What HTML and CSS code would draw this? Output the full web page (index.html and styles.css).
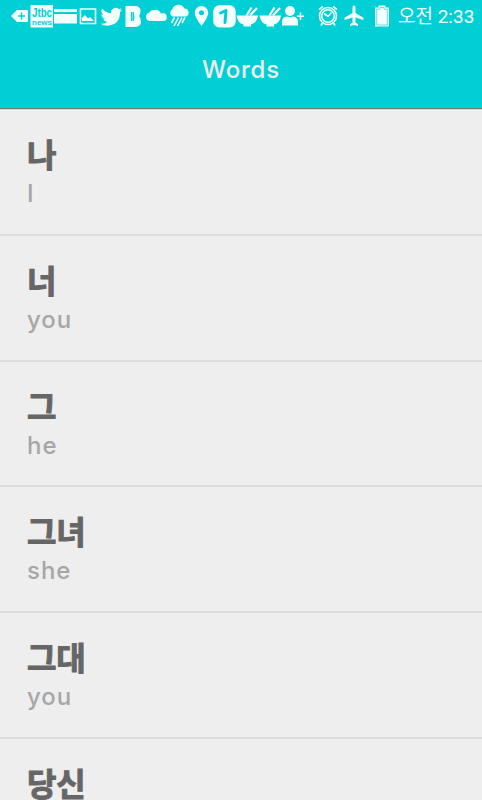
FILE: index.html
```
<!DOCTYPE html>
<html lang="ko">
<head>
    <meta charset="UTF-8">
    <meta name="viewport" content="width=device-width, initial-scale=1.0">
    <title>Words</title>

    <link rel="stylesheet" href="styles.css">
</head>
<body>

<header class="app-bar">
    <div class="status-bar">
        <div class="notifications">
            <svg viewBox="0 0 23 32"><path d="M4 16l6-6h10q1 0 1 1v10q0 1-1 1H10z"/><path class="cut-line" d="M14.5 12.5v7M11 16h7"/></svg>
            <svg viewBox="0 0 23 32"><path d="M.5 5H23v22.500H.5z"/><text class="cut logo-top" x="2" y="17" textLength="20" lengthAdjust="spacingAndGlyphs">Jtbc</text><text class="cut logo-bottom" x="2" y="24.500" textLength="20" lengthAdjust="spacingAndGlyphs">news</text></svg>
            <svg viewBox="0 0 23 32"><path d="M1 9h23v3H1zM1 14h23v9.500H1z"/></svg>
            <svg viewBox="0 0 23 32"><path class="line" d="M4.500 9h15v14.500h-15z"/><path d="M6 21v-3l3-3 3 3.500 2-1.500 4 4z"/></svg>
            <svg viewBox="0 0 23 32"><path d="M23 9.700q-1 .5-2.300.7 1.300-.8 1.800-2.300-1.200.8-2.700 1.100a4.500 4.500 0 0 0-7.600 4.100q-5.500-.3-9.100-4.700-2 3.500 1.300 6.100-1.100 0-2-.5 0 3.500 3.600 4.500-1 .3-2 .1 1 2.800 4.200 3.100Q5.300 24 1.500 23.700q3 2 6.900 2 12.500-.5 12.700-13.600 1.200-1 1.900-2.400z"/></svg>
            <svg viewBox="0 0 23 32"><path d="M3.500 6h11q4 1 4 5 0 3-1.500 5 2 2 2 5.500 0 4.500-5 5.500H3.500z"/><path class="cut" d="M9 12h1.500v9H9zM11.800 12q1.200 4.500 0 9h-.8v-9z"/></svg>
            <svg viewBox="0 0 23 32"><path d="M4.500 21a4.200 4.200 0 0 1-.3-8.200 5 5 0 0 1 5-2.800 5.300 5.300 0 0 1 6.800 3.800 3.700 3.700 0 0 1 5.800 3.200q0 4-3.500 4z"/></svg>
            <svg viewBox="0 0 23 32"><path d="M4.500 16.500a4 4 0 0 1-.3-7 6.500 6.500 0 0 1 12.200-1 4.300 4.300 0 0 1 2.100 8z"/><path class="line" d="M6.500 17.500l-3 5.500M10.500 17.500l-4.500 8.500M14 17.500l-4.500 8.500M17 17.500l-3 5.500"/></svg>
            <svg viewBox="0 0 23 32"><path fill-rule="evenodd" d="M10.500 6a6.800 6.800 0 0 1 6.800 6.800Q17.300 17 10.500 26 3.700 17 3.700 12.800A6.800 6.800 0 0 1 10.500 6zm0 4.200a2.500 2.500 0 1 0 0 5 2.500 2.500 0 0 0 0-5z"/></svg>
            <svg viewBox="0 0 23 32"><rect x="-.7" y="5.200" width="22.400" height="22.300" rx="6"/><path class="cut-line one" d="M6.500 13l5.500-2.500-1 12"/></svg>
            <svg viewBox="0 0 23 32"><path d="M-.5 15.500h21.500q-1 7.500-7 9v2H6.500v-2q-6-1.500-7-9z"/><path class="line thick" d="M9.500 15.500l5-8M13 15.500l7-7.500"/></svg>
            <svg viewBox="0 0 23 32"><path d="M-.5 15.500h21.500q-1 7.500-7 9v2H6.500v-2q-6-1.500-7-9z"/><path class="line thick" d="M9.500 15.500l5-8M13 15.500l7-7.500"/></svg>
            <svg viewBox="0 0 23 32"><circle cx="7" cy="11" r="5"/><path d="M-1 25.500V22q0-5 5-5.500 3 1.500 6 0 5 .5 5 5.500v3.500z"/><path class="line" d="M17.500 12.500v7.500M14 16.200h7"/></svg>
        </div>

        <div class="system">
            <svg class="alarm" viewBox="0 0 22 32"><circle class="line" cx="11" cy="16" r="8.500"/><circle class="line" cx="11" cy="16" r="6.300"/><path class="line" d="M14.500 12.500L11 16.500l-4-3M2 9.500l4-3M20 9.500l-4-3M5.500 23L4 25.500M16.500 23l1.500 2.500"/></svg>
            <svg class="plane" viewBox="0 0 22 32"><path d="M9.500 13V7.500q0-2 1.500-2t1.500 2V13l8 4.700v2.200l-8-2.400v5l2.500 1.800V26L11 25l-4 1v-1.700l2.500-1.800v-5l-8 2.400v-2.200z"/></svg>
            <svg class="battery" viewBox="0 0 16 32"><path d="M4.500 5.500h7v2H15v19H1v-19h3.500z"/><path class="cut-line thin" d="M2.700 25V9.200h3.200V7.500h4.200v1.700h3.200V25z"/></svg>
            <span class="clock">오전 2:33</span>
        </div>
    </div>
    <h1>Words</h1>
</header>

<ul class="word-list">
    <li>
        <span class="word">나</span>
        <span class="meaning">I</span>
    </li>
    <li>
        <span class="word">너</span>
        <span class="meaning">you</span>
    </li>
    <li>
        <span class="word">그</span>
        <span class="meaning">he</span>
    </li>
    <li>
        <span class="word">그녀</span>
        <span class="meaning">she</span>
    </li>
    <li>
        <span class="word">그대</span>
        <span class="meaning">you</span>
    </li>
    <li>
        <span class="word">당신</span>
    </li>
</ul>

</body>
</html>
```

FILE: styles.css
```
* {
    box-sizing: border-box;
}

body {
    font-family: "Inter", "Noto Sans CJK KR", sans-serif;
    background-color: #eeeeee;
    margin: 0;
    height: 800px;
    overflow: hidden;
}

.app-bar {
    height: 108px;
    background-color: #00d0d5;
    box-shadow: 0 1px 1px rgba(0, 0, 0, 0.5);
}

.status-bar {
    display: flex;
    justify-content: space-between;
    height: 32px;
    padding: 0 8px 0 7px;
    color: #f4ffff;
}

.notifications, .system {
    display: flex;
}

svg {
    display: block;
    height: 32px;
    fill: #f4ffff;
    overflow: visible;
}

.notifications svg {
    width: 23px;
}

.line, .cut-line {
    fill: none;
    stroke: #f4ffff;
    stroke-width: 1.6;
}

.cut {
    fill: #00d0d5;
}

.cut-line {
    stroke: #00d0d5;
    stroke-width: 1.4;
}

.thin {
    stroke-width: 0.6;
}

.thick {
    stroke-width: 2.2;
}

.one {
    stroke-width: 3;
    stroke-linecap: round;
    stroke-linejoin: round;
}

.logo-top {
    font: bold 12px "Liberation Sans", sans-serif;
}

.logo-bottom {
    font: bold 7px "Liberation Sans", sans-serif;
}

.alarm, .plane {
    width: 22px;
}

.plane {
    margin-left: 4px;
}

.battery {
    width: 16px;
    margin-left: 9px;
}

.clock {
    width: 76px;
    margin-left: 8px;
    font-family: "Roboto", "Noto Sans CJK KR", sans-serif;
    font-size: 19px;
    line-height: 34px;
    white-space: nowrap;
}

h1 {
    margin: 0;
    padding-top: 22px;
    text-align: center;
    color: #eeeeee;
    font-size: 24px;
    font-weight: 500;
    line-height: 32px;
    letter-spacing: 0.8px;
}

.word-list {
    list-style: none;
    margin: 0;
    padding: 2px 0 0;
}

.word-list li {
    display: flex;
    flex-direction: column;
    height: 125.8px;
    padding: 22px 27px 0;
    border-bottom: 2px solid #dddddd;
}

.word-list li:last-child {
    height: 69px;
    border-bottom: none;
}

.word {
    height: 46px;
    color: #666666;
    font-family: "Noto Sans CJK KR", sans-serif;
    font-size: 32px;
    font-weight: 700;
    line-height: 42px;
    letter-spacing: -0.3px;
    -webkit-text-stroke: 1px #666666;
}

.meaning {
    color: #a6a6a6;
    font-size: 24px;
    font-weight: 500;
    line-height: 32px;
    letter-spacing: 1px;
}
```
